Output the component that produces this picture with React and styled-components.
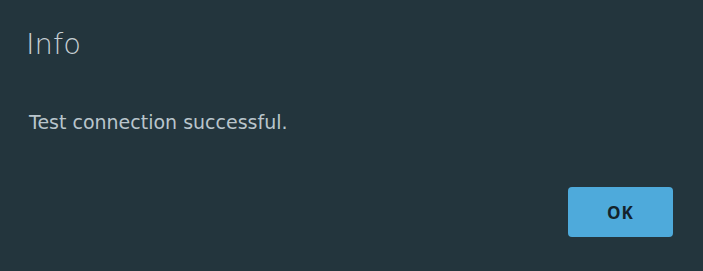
import React from 'react'
import styled, { createGlobalStyle } from 'styled-components'

const GlobalStyle = createGlobalStyle`
  html, body {
    margin: 0;
    padding: 0;
    background: #23353d;
  }
  body {
    font-family: 'DejaVu Sans', 'Open Sans', sans-serif;
  }
`

const Dialog = styled.div`
  width: 703px;
  height: 271px;
  box-sizing: border-box;
  background: #23353d;
  padding: 24px 30px 34px 26px;
  display: flex;
  flex-direction: column;
`

const Title = styled.h2`
  margin: 0;
  font-size: 29px;
  font-weight: 200;
  color: #c6ced3;
  line-height: 40px;
`

const Message = styled.p`
  margin: 46px 0 0 3px;
  font-size: 19px;
  font-weight: 400;
  color: #b9c5cc;
  line-height: 24px;
`

const Actions = styled.div`
  margin-top: auto;
  display: flex;
  justify-content: flex-end;
`

const Button = styled.button`
  width: 105px;
  height: 50px;
  border: none;
  border-radius: 4px;
  background: ${({ $primary }) => ($primary ? '#4eaadb' : '#3a4a52')};
  color: #14232b;
  font-family: 'Open Sans', 'Noto Sans', sans-serif;
  font-size: 17px;
  font-weight: 700;
  letter-spacing: 1px;
  cursor: pointer;
`

const App = () => {
  return (
    <>
      <GlobalStyle />
      <Dialog>
        <Title>Info</Title>
        <Message>Test connection successful.</Message>
        <Actions>
          <Button $primary>OK</Button>
        </Actions>
      </Dialog>
    </>
  )
}

export default App
